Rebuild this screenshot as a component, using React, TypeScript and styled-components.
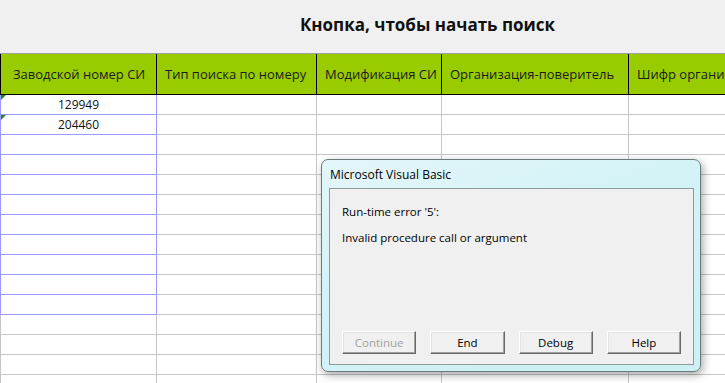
import React from 'react';
import styled, { createGlobalStyle } from 'styled-components';

const GlobalStyle = createGlobalStyle`
  html, body {
    margin: 0;
    padding: 0;
    background: #ffffff;
    overflow: hidden;
  }
`;

const Page = styled.div`
  position: relative;
  width: 725px;
  height: 383px;
  overflow: hidden;
  background: #ffffff;
  font-family: 'Open Sans', 'Noto Sans', sans-serif;
`;

const TitleBar = styled.div`
  height: 53px;
  background: #f0f0f0;
  border-bottom: 1px solid #a0a0a0;
  display: flex;
  align-items: center;
  justify-content: center;
  padding-left: 130px;
  box-sizing: content-box;
`;

const Title = styled.h1`
  margin: 0 0 4px;
  font-size: 17px;
  font-weight: 700;
  color: #111111;
`;

const Grid = styled.div`
  display: flex;
  flex-direction: column;
`;

const Row = styled.div<{ $h: number }>`
  display: flex;
  height: ${p => p.$h}px;
  white-space: nowrap;
`;

const widths = [157, 160, 125, 187, 200];

const HeadCell = styled.div<{ $w: number; $first?: boolean }>`
  flex: 0 0 ${p => p.$w}px;
  box-sizing: border-box;
  background: #99cc00;
  border-right: 1px solid #000;
  border-bottom: 1px solid #000;
  border-left: ${p => (p.$first ? '1px solid #000' : 'none')};
  display: flex;
  align-items: center;
  padding-left: ${p => (p.$first ? 12 : 8)}px;
  font-size: 13px;
  color: #1a1a1a;
  overflow: hidden;
`;

const Cell = styled.div<{ $w: number; $first?: boolean; $sel?: boolean }>`
  position: relative;
  flex: 0 0 ${p => p.$w}px;
  box-sizing: border-box;
  border-right: 1px solid ${p => (p.$sel ? '#9999ff' : '#c6c6c6')};
  border-bottom: 1px solid ${p => (p.$sel ? '#9999ff' : '#c6c6c6')};
  border-left: ${p => (p.$first ? `1px solid ${p.$sel ? '#9999ff' : '#c6c6c6'}` : 'none')};
  display: flex;
  align-items: center;
  justify-content: center;
  font-size: 12px;
  color: #111;
`;

const ErrorMark = styled.span`
  position: absolute;
  left: 0;
  top: 0;
  width: 0;
  height: 0;
  border-top: 5px solid #1f8a1f;
  border-right: 5px solid transparent;
`;

const Dialog = styled.div`
  position: absolute;
  left: 321px;
  top: 159px;
  width: 380px;
  height: 213px;
  box-sizing: border-box;
  border: 1px solid #6b7a7d;
  border-radius: 7px;
  background: linear-gradient(160deg, #e4f6f9 0%, #d3f3f7 40%, #ccf0f4 100%);
  box-shadow: 2px 3px 8px rgba(0, 0, 0, 0.35);
  display: flex;
  flex-direction: column;
  padding: 0 6px 6px 7px;
  font-family: 'Open Sans', 'Noto Sans', sans-serif;
`;

const DialogTitle = styled.div`
  height: 28px;
  display: flex;
  align-items: center;
  padding-left: 1px;
  font-size: 12px;
  color: #000;
`;

const Client = styled.div`
  flex: 1;
  background: #f0f0f0;
  border: 1px solid #8e9a9c;
  display: flex;
  flex-direction: column;
  padding: 9px 12px 10px;
  font-size: 11.5px;
  color: #000;
`;

const Message = styled.div`
  height: 26px;
  display: flex;
  align-items: center;
`;

const Buttons = styled.div`
  margin-top: auto;
  display: flex;
  gap: 14px;
`;

const Button = styled.button<{ $disabled?: boolean }>`
  width: 75px;
  height: 23px;
  box-sizing: border-box;
  background: #f0f0f0;
  border: 1px solid;
  border-color: #ffffff #696969 #696969 #ffffff;
  box-shadow: inset -1px -1px 0 #a0a0a0, inset 1px 1px 0 #e3e3e3;
  font-family: inherit;
  font-size: 11.5px;
  color: ${p => (p.$disabled ? '#a0a0a0' : '#000')};
  padding: 0;
`;

const headers = [
  'Заводской номер СИ',
  'Тип поиска по номеру',
  'Модификация СИ',
  'Организация-поверитель',
  'Шифр организации',
];

const values = ['129949', '204460'];

export default function App() {
  const rows = Array.from({ length: 15 }, (_, i) => i);
  return (
    <Page>
      <GlobalStyle />
      <TitleBar>
        <Title>Кнопка, чтобы начать поиск</Title>
      </TitleBar>
      <Grid>
        <Row $h={41}>
          {headers.map((h, i) => (
            <HeadCell key={h} $w={widths[i]} $first={i === 0}>
              {h}
            </HeadCell>
          ))}
        </Row>
        {rows.map(r => (
          <Row key={r} $h={20}>
            {widths.map((w, c) => (
              <Cell key={c} $w={w} $first={c === 0} $sel={c === 0 && r < 11}>
                {c === 0 && values[r] && (
                  <>
                    <ErrorMark />
                    {values[r]}
                  </>
                )}
              </Cell>
            ))}
          </Row>
        ))}
      </Grid>
      <Dialog>
        <DialogTitle>Microsoft Visual Basic</DialogTitle>
        <Client>
          <Message>Run-time error '5':</Message>
          <Message>Invalid procedure call or argument</Message>
          <Buttons>
            <Button $disabled>Continue</Button>
            <Button>End</Button>
            <Button>Debug</Button>
            <Button>Help</Button>
          </Buttons>
        </Client>
      </Dialog>
    </Page>
  );
}
